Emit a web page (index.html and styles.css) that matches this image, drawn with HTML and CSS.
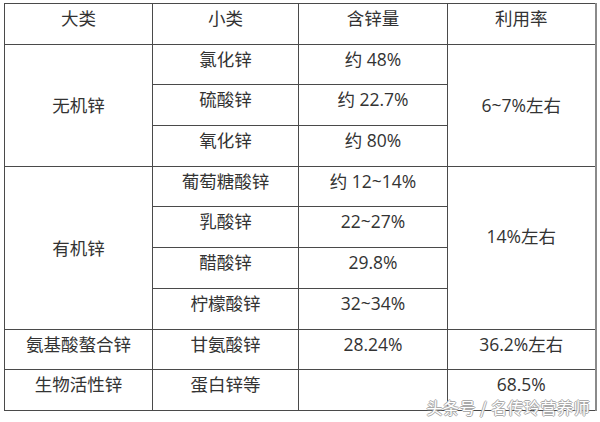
FILE: index.html
```html
<!DOCTYPE html>
<html lang="zh">
<head>
<meta charset="utf-8">
<link rel="stylesheet" href="styles.css">
</head>
<body>
<div class="page">
  <table class="zinc">
    <colgroup>
      <col class="c1"><col class="c2"><col class="c3"><col class="c4">
    </colgroup>
    <tr class="head">
      <td>大类</td><td>小类</td><td>含锌量</td><td class="last">利用率</td>
    </tr>
    <tr>
      <td rowspan="3" class="merge">无机锌</td><td>氯化锌</td><td>约 48%</td><td rowspan="3" class="merge last">6~7%左右</td>
    </tr>
    <tr><td>硫酸锌</td><td>约 22.7%</td></tr>
    <tr><td>氧化锌</td><td>约 80%</td></tr>
    <tr>
      <td rowspan="4" class="merge">有机锌</td><td>葡萄糖酸锌</td><td>约 12~14%</td><td rowspan="4" class="merge up last">14%左右</td>
    </tr>
    <tr><td>乳酸锌</td><td>22~27%</td></tr>
    <tr><td>醋酸锌</td><td>29.8%</td></tr>
    <tr><td>柠檬酸锌</td><td>32~34%</td></tr>
    <tr>
      <td>氨基酸螯合锌</td><td>甘氨酸锌</td><td>28.24%</td><td class="last">36.2%左右</td>
    </tr>
    <tr>
      <td>生物活性锌</td><td>蛋白锌等</td><td></td><td class="last">68.5%</td>
    </tr>
  </table>
  <div class="mark">头条号 / 名传玲营养师</div>
</div>
</body>
</html>
```

FILE: styles.css
```css
html, body {
  margin: 0;
  padding: 0;
  background: #ffffff;
}
.page {
  position: relative;
  width: 600px;
  height: 422px;
  padding: 3px 0 0 4px;
  box-sizing: border-box;
}
.zinc {
  border-collapse: collapse;
  table-layout: fixed;
  width: 591px;
  font-family: "Open Sans", "Noto Sans CJK SC", sans-serif;
  font-size: 17.5px;
  color: #333333;
}
.c1 { width: 148px; }
.c2 { width: 146px; }
.c3 { width: 149px; }
.c4 { width: 148px; }
.zinc tr { height: 40.7px; }
.zinc td {
  border: 1px solid #4a4a4a;
  text-align: center;
  vertical-align: top;
  padding: 3px 0 0 0;
  line-height: 22px;
  white-space: nowrap;
}
.zinc td.merge {
  vertical-align: middle;
  padding: 0;
}
.zinc td.up {
  padding-bottom: 24px;
}
.zinc td.last {
  border-right: 2px solid #8a8a8a;
}
.mark {
  position: absolute;
  right: 10px;
  bottom: 5px;
  font-family: "Noto Sans CJK SC", sans-serif;
  font-size: 16px;
  line-height: 20px;
  color: #ffffff;
  letter-spacing: 0.5px;
  text-shadow: 1px 0 0 #aaa, -1px 0 0 #aaa, 0 1px 0 #aaa, 0 -1px 0 #aaa;
}
```
